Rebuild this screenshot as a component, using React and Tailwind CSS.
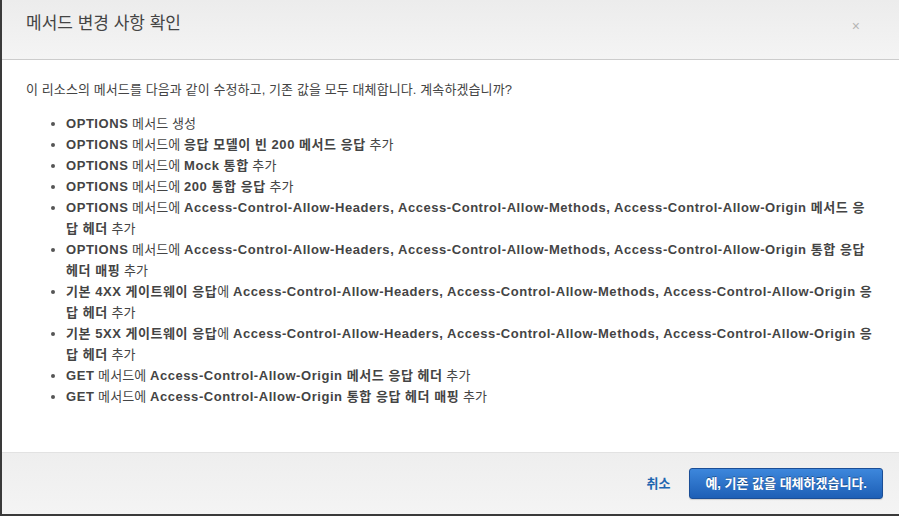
const items = [
  [['b', 'OPTIONS'], ['n', ' 메서드 생성']],
  [['b', 'OPTIONS'], ['n', ' 메서드에 '], ['b', '응답 모델이 빈 200 메서드 응답'], ['n', ' 추가']],
  [['b', 'OPTIONS'], ['n', ' 메서드에 '], ['b', 'Mock 통합'], ['n', ' 추가']],
  [['b', 'OPTIONS'], ['n', ' 메서드에 '], ['b', '200 통합 응답'], ['n', ' 추가']],
  [
    ['b', 'OPTIONS'],
    ['n', ' 메서드에 '],
    ['b', 'Access-Control-Allow-Headers, Access-Control-Allow-Methods, Access-Control-Allow-Origin 메서드 응답 헤더'],
    ['n', ' 추가']
  ],
  [
    ['b', 'OPTIONS'],
    ['n', ' 메서드에 '],
    ['b', 'Access-Control-Allow-Headers, Access-Control-Allow-Methods, Access-Control-Allow-Origin 통합 응답 헤더 매핑'],
    ['n', ' 추가']
  ],
  [
    ['b', '기본 4XX 게이트웨이 응답'],
    ['n', '에 '],
    ['b', 'Access-Control-Allow-Headers, Access-Control-Allow-Methods, Access-Control-Allow-Origin 응답 헤더'],
    ['n', ' 추가']
  ],
  [
    ['b', '기본 5XX 게이트웨이 응답'],
    ['n', '에 '],
    ['b', 'Access-Control-Allow-Headers, Access-Control-Allow-Methods, Access-Control-Allow-Origin 응답 헤더'],
    ['n', ' 추가']
  ],
  [['b', 'GET'], ['n', ' 메서드에 '], ['b', 'Access-Control-Allow-Origin 메서드 응답 헤더'], ['n', ' 추가']],
  [['b', 'GET'], ['n', ' 메서드에 '], ['b', 'Access-Control-Allow-Origin 통합 응답 헤더 매핑'], ['n', ' 추가']]
]

export default function App() {
  return (
    <div
      className="w-[899px] h-[516px] flex flex-col bg-white border-l-2 border-b-2 border-[#3a3a3a] text-[#444] overflow-hidden"
      style={{ fontFamily: '"Liberation Sans", "Noto Sans CJK KR", sans-serif' }}
    >
      <div className="h-[60px] shrink-0 flex items-center justify-between pl-[24px] pr-[38px] bg-gradient-to-b from-[#ececec] to-[#f4f4f4] border-b border-[#cccccc]">
        <h1 className="text-[17px] leading-none text-[#444] -mt-[12px]">메서드 변경 사항 확인</h1>
        <span className="text-[14px] text-[#b5b5b5] -mt-[6px] mr-[1px]">×</span>
      </div>

      <div className="flex-1 pl-[24px] pr-[25px] pt-[19px] text-[13px] leading-[21px] tracking-[0.1px]">
        <p>이 리소스의 메서드를 다음과 같이 수정하고, 기존 값을 모두 대체합니다. 계속하겠습니까?</p>
        <ul className="mt-[13px] pl-[40px] list-disc marker:text-[#555]">
          {items.map((parts, i) => (
            <li key={i}>
              {parts.map(([t, s], j) =>
                t === 'b' ? (
                  <b key={j} className="font-bold tracking-[0.55px]">{s}</b>
                ) : (
                  <span key={j}>{s}</span>
                )
              )}
            </li>
          ))}
        </ul>
      </div>

      <div className="h-[62px] shrink-0 flex items-center justify-end gap-[19px] pr-[16px] bg-gradient-to-b from-[#eeeeee] to-[#f4f4f4] border-t border-[#e2e2e2]">
        <button className="text-[13px] font-bold text-[#1e65b0]">취소</button>
        <button className="h-[31px] px-[15px] rounded-[3px] border border-[#1b4e96] bg-gradient-to-b from-[#3d87dc] to-[#1d5fb6] text-white text-[13px] font-bold [text-shadow:0_-1px_0_rgba(0,0,0,0.35)] shadow-[0_1px_1px_rgba(0,0,0,0.15)]">
          예, 기존 값을 대체하겠습니다.
        </button>
      </div>
    </div>
  )
}
